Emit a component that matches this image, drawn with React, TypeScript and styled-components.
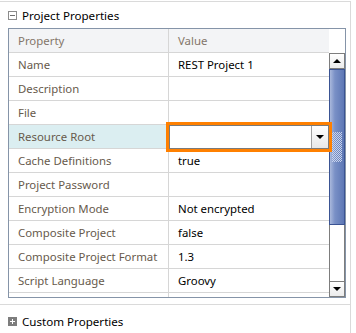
import styled, { createGlobalStyle } from "styled-components";

const GlobalStyle = createGlobalStyle`
  body {
    margin: 0;
    background: #ffffff;
    font-family: "Noto Sans", "Open Sans", sans-serif;
    font-size: 11.4px;
  }
`;

type Row = { name: string; value?: string; combo?: boolean };

const rows: Row[] = [
  { name: "Name", value: "REST Project 1" },
  { name: "Description" },
  { name: "File" },
  { name: "Resource Root", combo: true },
  { name: "Cache Definitions", value: "true" },
  { name: "Project Password" },
  { name: "Encryption Mode", value: "Not encrypted" },
  { name: "Composite Project", value: "false" },
  { name: "Composite Project Format", value: "1.3" },
  { name: "Script Language", value: "Groovy" },
];

export default function App() {
  return (
    <>
      <GlobalStyle />
      <Panel>
        <Section>
          <SectionHeader>
            <ToggleIcon expanded />
            <SectionTitle>Project Properties</SectionTitle>
          </SectionHeader>
          <Table>
            <Columns>
              <HeaderRow>
                <HeadCell>Property</HeadCell>
                <HeadCell>Value</HeadCell>
              </HeaderRow>
              {rows.map((row) => (
                <DataRow key={row.name}>
                  <NameCell selected={row.combo}>{row.name}</NameCell>
                  <ValueCell>
                    {row.value}
                    {row.combo && (
                      <Focus>
                        <Combo>
                          <ComboInput />
                          <ComboButton>
                            <Arrow />
                          </ComboButton>
                        </Combo>
                      </Focus>
                    )}
                  </ValueCell>
                </DataRow>
              ))}
              <PartialRow>
                <NameCell />
                <ValueCell />
              </PartialRow>
            </Columns>
            <ScrollColumn>
              <ScrollSpacer />
              <ScrollButton>
                <Arrow up />
              </ScrollButton>
              <Thumb>
                <Grip />
              </Thumb>
              <Track />
              <ScrollButton>
                <Arrow />
              </ScrollButton>
            </ScrollColumn>
          </Table>
        </Section>
        <SectionHeader tall>
          <ToggleIcon />
          <SectionTitle>Custom Properties</SectionTitle>
        </SectionHeader>
      </Panel>
    </>
  );
}

function ToggleIcon({ expanded }: { expanded?: boolean }) {
  return (
    <svg width="9" height="9" viewBox="0 0 9 9">
      {expanded ? (
        <>
          <rect x="0.5" y="0.5" width="8" height="8" fill="#fff" stroke="#8c8c8c" />
          <rect x="2" y="4" width="5" height="1" fill="#6e6e6e" />
        </>
      ) : (
        <>
          <rect x="0" y="0" width="9" height="9" fill="#7d7d7d" />
          <rect x="2" y="4" width="5" height="1" fill="#fff" />
          <rect x="4" y="2" width="1" height="5" fill="#fff" />
        </>
      )}
    </svg>
  );
}

const Panel = styled.div`
  width: 351px;
  margin-top: 1px;
  border-top: 1px solid #dadada;
  border-right: 1px solid #dadada;
  height: 332px;
  box-sizing: border-box;
`;

const Section = styled.div`
  padding-bottom: 6px;
  border-bottom: 1px solid #dadada;
`;

const SectionHeader = styled.div<{ tall?: boolean }>`
  height: ${(p) => (p.tall ? "32px" : "26px")};
  display: flex;
  align-items: center;
  gap: 5px;
  padding-left: 8px;
`;

const SectionTitle = styled.span`
  color: #000;
  font-size: 11.6px;
`;

const Table = styled.div`
  margin-left: 8px;
  width: 338px;
  height: 270px;
  box-sizing: border-box;
  border: 1px solid #8594a8;
  display: flex;
  overflow: hidden;
`;

const Columns = styled.div`
  width: 320px;
  display: flex;
  flex-direction: column;
`;

const HeaderRow = styled.div`
  display: grid;
  grid-template-columns: 159px 161px;
  height: 24px;
  background: #f3f4f6;
  border-bottom: 1px solid #d6d6d6;
  box-sizing: border-box;
`;

const HeadCell = styled.div`
  display: flex;
  align-items: center;
  padding-left: 9px;
  color: #84766a;
  & + & {
    border-left: 1px solid #d6d6d6;
  }
`;

const DataRow = styled.div`
  display: grid;
  grid-template-columns: 159px 161px;
  height: 24px;
  border-bottom: 1px solid #d6d6d6;
  box-sizing: border-box;
`;

const PartialRow = styled(DataRow)`
  height: 4px;
  border-bottom: none;
`;

const NameCell = styled.div<{ selected?: boolean }>`
  display: flex;
  align-items: center;
  padding-left: 9px;
  color: #675a4c;
  background: ${(p) => (p.selected ? "#dbeef1" : "transparent")};
  white-space: nowrap;
`;

const ValueCell = styled.div`
  position: relative;
  display: flex;
  align-items: center;
  padding-left: 9px;
  color: #000;
  border-left: 1px solid #d6d6d6;
`;

const Focus = styled.div`
  position: absolute;
  left: -3px;
  top: -3px;
  width: 166px;
  height: 30px;
  box-sizing: border-box;
  border: 3px solid #ff8000;
  z-index: 2;
`;

const Combo = styled.div`
  height: 100%;
  display: flex;
  border: 1px solid #7a7a7a;
  box-sizing: border-box;
  background: #fff;
`;

const ComboInput = styled.div`
  flex: 1;
`;

const ComboButton = styled.div`
  width: 16px;
  display: flex;
  align-items: center;
  justify-content: center;
  border-left: 1px solid #a0a0a0;
  background: linear-gradient(#ffffff, #e8e8e8);
`;

const Arrow = styled.div<{ up?: boolean }>`
  width: 0;
  height: 0;
  border-left: 4px solid transparent;
  border-right: 4px solid transparent;
  ${(p) => (p.up ? "border-bottom: 4px solid #000;" : "border-top: 4px solid #000;")}
`;

const ScrollColumn = styled.div`
  width: 16px;
  display: flex;
  flex-direction: column;
`;

const ScrollSpacer = styled.div`
  height: 24px;
`;

const ScrollButton = styled.div`
  height: 16px;
  box-sizing: border-box;
  border: 1px solid #7d7d7d;
  background: linear-gradient(#ffffff, #ebebeb);
  display: flex;
  align-items: center;
  justify-content: center;
`;

const Thumb = styled.div`
  height: 156px;
  box-sizing: border-box;
  border: 1px solid #3a5393;
  background: linear-gradient(90deg, #a9b8dc 0%, #7990c6 35%, #5d77b5 100%);
  display: flex;
  align-items: center;
  justify-content: center;
`;

const Grip = styled.div`
  width: 10px;
  height: 30px;
  background-image: repeating-conic-gradient(#c9d3ec 0 25%, transparent 0 50%);
  background-size: 2px 2px;
`;

const Track = styled.div`
  flex: 1;
  box-sizing: border-box;
  border: 1px solid #7d7d7d;
  border-top: none;
  border-bottom: none;
  background: #fff;
`;
